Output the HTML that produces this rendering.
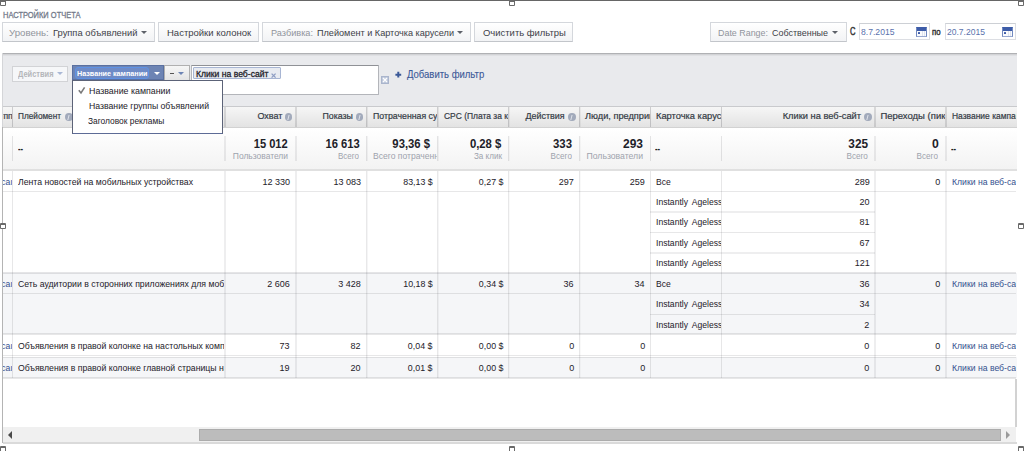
<!DOCTYPE html>
<html><head><meta charset="utf-8"><style>
html,body{margin:0;padding:0;width:1024px;height:451px;overflow:hidden;background:#fff;position:relative}
body div{position:absolute;box-sizing:border-box}
.t{position:absolute;white-space:pre;font-family:"Liberation Sans", sans-serif;-webkit-text-stroke:0px currentColor}
</style></head><body>
<div style='left:0px;top:0px;width:1024px;height:1px;background:#666666'></div>
<span class='t' style='top:10.80px;font-size:8.5px;line-height:8.5px;color:#737a8a;font-weight:normal;transform:scaleX(0.8805);left:2.50px;transform-origin:0 0;-webkit-text-stroke:0.3px #737a8a'>НАСТРОЙКИ ОТЧЕТА</span>
<div style='left:2px;top:22px;width:153px;height:20px;border:1px solid #d4d7dc;border-bottom-color:#c2c5ca;background:linear-gradient(#ffffff,#f2f3f5);'></div>
<span class='t' style='top:27.96px;font-size:9.5px;line-height:9.5px;color:#90949c;font-weight:normal;transform:scaleX(1.0144);left:9.40px;transform-origin:0 0;'>Уровень:</span>
<span class='t' style='top:27.96px;font-size:9.5px;line-height:9.5px;color:#3d4148;font-weight:normal;transform:scaleX(0.9841);left:52.80px;transform-origin:0 0;'>Группа объявлений</span>
<div style='left:141.4px;top:30.5px;width:0;height:0;border-left:3.0px solid transparent;border-right:3.0px solid transparent;border-top:3.5px solid #5d6169'></div>
<div style='left:158px;top:22px;width:101px;height:20px;border:1px solid #d4d7dc;border-bottom-color:#c2c5ca;background:linear-gradient(#ffffff,#f2f3f5);'></div>
<span class='t' style='top:27.96px;font-size:9.5px;line-height:9.5px;color:#3d4148;font-weight:normal;transform:scaleX(1.0001);left:166.60px;transform-origin:0 0;'>Настройки колонок</span>
<div style='left:262px;top:22px;width:209px;height:20px;border:1px solid #d4d7dc;border-bottom-color:#c2c5ca;background:linear-gradient(#ffffff,#f2f3f5);'></div>
<span class='t' style='top:27.96px;font-size:9.5px;line-height:9.5px;color:#90949c;font-weight:normal;transform:scaleX(0.9648);left:271.00px;transform-origin:0 0;'>Разбивка:</span>
<span class='t' style='top:27.96px;font-size:9.5px;line-height:9.5px;color:#3d4148;font-weight:normal;transform:scaleX(0.9598);left:316.70px;transform-origin:0 0;'>Плейомент и Карточка карусели</span>
<div style='left:457px;top:30.5px;width:0;height:0;border-left:3.0px solid transparent;border-right:3.0px solid transparent;border-top:3.5px solid #5d6169'></div>
<div style='left:474px;top:22px;width:99px;height:20px;border:1px solid #d4d7dc;border-bottom-color:#c2c5ca;background:linear-gradient(#ffffff,#f2f3f5);'></div>
<span class='t' style='top:27.96px;font-size:9.5px;line-height:9.5px;color:#3d4148;font-weight:normal;transform:scaleX(0.9947);left:482.60px;transform-origin:0 0;'>Очистить фильтры</span>
<div style='left:710px;top:22px;width:137px;height:20px;border:1px solid #d4d7dc;border-bottom-color:#c2c5ca;background:linear-gradient(#ffffff,#f2f3f5);'></div>
<span class='t' style='top:27.96px;font-size:9.5px;line-height:9.5px;color:#90949c;font-weight:normal;transform:scaleX(0.9373);left:718.00px;transform-origin:0 0;'>Date Range:</span>
<span class='t' style='top:27.96px;font-size:9.5px;line-height:9.5px;color:#3d4148;font-weight:normal;transform:scaleX(0.9424);left:772.00px;transform-origin:0 0;'>Собственные</span>
<div style='left:832px;top:30.5px;width:0;height:0;border-left:3.0px solid transparent;border-right:3.0px solid transparent;border-top:3.5px solid #5d6169'></div>
<span class='t' style='top:26.74px;font-size:10px;line-height:10px;color:#333;font-weight:normal;transform:scaleX(0.7603);left:850.00px;transform-origin:0 0;-webkit-text-stroke:0.45px #333'>С</span>
<div style='left:859px;top:23px;width:71px;height:17px;border:1px solid #dcdee3;border-top-color:#cdd0d5;background:#fff;'></div>
<span class='t' style='top:26.96px;font-size:9.5px;line-height:9.5px;color:#5a72ad;font-weight:normal;transform:scaleX(0.9058);left:861.00px;transform-origin:0 0;'>8.7.2015</span>
<span class='t' style='top:27.16px;font-size:9.5px;line-height:9.5px;color:#333;font-weight:normal;transform:scaleX(0.8240);left:932.40px;transform-origin:0 0;-webkit-text-stroke:0.45px #333'>по</span>
<div style='left:945px;top:23px;width:71px;height:17px;border:1px solid #dcdee3;border-top-color:#cdd0d5;background:#fff;'></div>
<span class='t' style='top:26.96px;font-size:9.5px;line-height:9.5px;color:#5a72ad;font-weight:normal;transform:scaleX(0.8991);left:947.00px;transform-origin:0 0;'>20.7.2015</span>
<div style='left:916px;top:27px;width:10.5px;height:9.5px;border:1px solid #7189c0;border-top-color:#3d5ca8;border-bottom-color:#98a8d0;background:#fafbfd'><div style='left:0;top:0;width:8.5px;height:2.5px;background:#3d5ca8'></div><div style='left:1px;top:3.6px;width:2.2px;height:2.2px;background:#3a58a6;border-radius:0.5px'></div><div style='left:5px;top:2.5px;width:1px;height:5px;background:#dfe4ef'></div><div style='left:7px;top:2.5px;width:1px;height:5px;background:#dfe4ef'></div></div>
<div style='left:1002px;top:27px;width:10.5px;height:9.5px;border:1px solid #7189c0;border-top-color:#3d5ca8;border-bottom-color:#98a8d0;background:#fafbfd'><div style='left:0;top:0;width:8.5px;height:2.5px;background:#3d5ca8'></div><div style='left:1px;top:3.6px;width:2.2px;height:2.2px;background:#3a58a6;border-radius:0.5px'></div><div style='left:5px;top:2.5px;width:1px;height:5px;background:#dfe4ef'></div><div style='left:7px;top:2.5px;width:1px;height:5px;background:#dfe4ef'></div></div>
<div style='left:2px;top:53px;width:1015px;height:53px;background:#e9eaed;border-top:1px solid #b0b1b4'></div>
<div style='left:3px;top:54px;width:1014px;height:1px;background:#d2d3d6'></div>
<div style='left:3px;top:55px;width:1014px;height:1px;background:#dfe0e3'></div>
<div style='left:12px;top:66px;width:56px;height:16px;background:#f6f7f9;border:1px solid #d2d3d6'></div>
<span class='t' style='top:69.88px;font-size:9px;line-height:9px;color:#b4b6ba;font-weight:bold;-webkit-text-stroke:0;transform:scaleX(0.8295);left:18.00px;transform-origin:0 0;'>Действия</span>
<div style='left:57px;top:72.2px;width:0;height:0;border-left:3.0px solid transparent;border-right:3.0px solid transparent;border-top:3.5px solid #a9b8d6'></div>
<div style='left:72px;top:65px;width:92px;height:15px;background:#6d84b4;border:1px solid #5a70a0'></div>
<div style='left:75px;top:67px;width:74px;height:12px;background:#6f8bc6;border:1.5px solid #5f92e4;border-radius:3px'></div>
<span class='t' style='top:69.53px;font-size:8px;line-height:8px;color:#ffffff;font-weight:bold;-webkit-text-stroke:0;transform:scaleX(0.9002);left:77.00px;transform-origin:0 0;'>Название кампании</span>
<div style='left:154.4px;top:72px;width:0;height:0;border-left:3.25px solid transparent;border-right:3.25px solid transparent;border-top:3.8px solid #ffffff'></div>
<div style='left:164px;top:65px;width:26px;height:15.5px;background:linear-gradient(#f6f6f6,#e4e4e4);border:1px solid #b0b0b0;border-bottom-color:#8f8f8f'></div>
<div style='left:169.5px;top:73px;width:4.5px;height:1.2px;background:#555'></div>
<div style='left:178px;top:71.6px;width:0;height:0;border-left:3.5px solid transparent;border-right:3.5px solid transparent;border-top:3.9px solid #6d84b4'></div>
<div style='left:191px;top:65px;width:188px;height:30px;background:#fff;border:1px solid #b3b5ba;border-top-color:#8f9196;border-radius:1px'></div>
<div style='left:193px;top:67px;width:88px;height:12px;background:#e8ebf1;border:1px solid #a7b5d3;border-radius:1px'></div>
<span class='t' style='top:68.76px;font-size:9.5px;line-height:9.5px;color:#1d2129;font-weight:normal;transform:scaleX(0.9054);left:196.00px;transform-origin:0 0;-webkit-text-stroke:0.3px #1d2129'>Клики на веб-сайт</span>
<svg style='position:absolute;left:0;top:0' width='1024' height='451'><path d='M271.6 73.6L275.6 77.6M275.6 73.6L271.6 77.6' stroke='#8d9dc3' stroke-width='1.3' fill='none'/></svg>
<div style='left:381px;top:76px;width:8px;height:8px;background:#bcc6da;border:1px solid #aab5cc'></div>
<svg style='position:absolute;left:0;top:0' width='1024' height='451'><path d='M383 78L387 82M387 78L383 82' stroke='#fff' stroke-width='1.4' fill='none'/></svg>
<svg style='position:absolute;left:0;top:0' width='1024' height='451'><path d='M395.4 74.7H401.2M398.3 71.8V77.6' stroke='#3b5998' stroke-width='2' fill='none'/></svg>
<span class='t' style='top:69.53px;font-size:10px;line-height:10px;color:#3b5998;font-weight:normal;transform:scaleX(0.9507);left:406.50px;transform-origin:0 0;-webkit-text-stroke:0.1px #3b5998'>Добавить фильтр</span>
<div style='left:2px;top:106px;width:1015px;height:22px;background:linear-gradient(#f6f6f6,#e3e3e3);border-top:1px solid #c9cacd;border-bottom:1px solid #d2d2d2'></div>
<div style='left:12px;top:107px;width:1px;height:20px;background:rgba(30,30,40,0.190)'></div>
<div style='left:224px;top:107px;width:1px;height:20px;background:rgba(30,30,40,0.133)'></div>
<div style='left:225px;top:107px;width:1px;height:20px;background:rgba(30,30,40,0.133)'></div>
<div style='left:295px;top:107px;width:1px;height:20px;background:rgba(30,30,40,0.133)'></div>
<div style='left:296px;top:107px;width:1px;height:20px;background:rgba(30,30,40,0.133)'></div>
<div style='left:366px;top:107px;width:1px;height:20px;background:rgba(30,30,40,0.186)'></div>
<div style='left:367px;top:107px;width:1px;height:20px;background:rgba(30,30,40,0.080)'></div>
<div style='left:437px;top:107px;width:1px;height:20px;background:rgba(30,30,40,0.186)'></div>
<div style='left:438px;top:107px;width:1px;height:20px;background:rgba(30,30,40,0.080)'></div>
<div style='left:508px;top:107px;width:1px;height:20px;background:rgba(30,30,40,0.190)'></div>
<div style='left:509px;top:107px;width:1px;height:20px;background:rgba(30,30,40,0.053)'></div>
<div style='left:579px;top:107px;width:1px;height:20px;background:rgba(30,30,40,0.190)'></div>
<div style='left:580px;top:107px;width:1px;height:20px;background:rgba(30,30,40,0.053)'></div>
<div style='left:650px;top:107px;width:1px;height:20px;background:rgba(30,30,40,0.190)'></div>
<div style='left:721px;top:107px;width:1px;height:20px;background:rgba(30,30,40,0.190)'></div>
<div style='left:874px;top:107px;width:1px;height:20px;background:rgba(30,30,40,0.133)'></div>
<div style='left:875px;top:107px;width:1px;height:20px;background:rgba(30,30,40,0.133)'></div>
<div style='left:945px;top:107px;width:1px;height:20px;background:rgba(30,30,40,0.133)'></div>
<div style='left:946px;top:107px;width:1px;height:20px;background:rgba(30,30,40,0.133)'></div>
<div style='left:3px;top:0;width:9px;height:451px;overflow:hidden'><span class='t' style='top:111.36px;font-size:9.5px;line-height:9.5px;color:#333a44;font-weight:normal;transform:scaleX(0.9000);left:-5.14px;transform-origin:100% 0;-webkit-text-stroke:0.2px #333a44'>тпп</span></div>
<span class='t' style='top:111.36px;font-size:9.5px;line-height:9.5px;color:#333a44;font-weight:normal;transform:scaleX(0.8657);left:18.00px;transform-origin:0 0;-webkit-text-stroke:0.2px #333a44'>Плейомент</span>
<div style='left:65px;top:113px;width:7.5px;height:8px;border-radius:50%;background:#a2aabb'><div style='left:3.3px;top:1.8px;width:1.1px;height:4.6px;background:#dfe3ea;transform:skewX(-14deg)'></div></div>
<span class='t' style='top:111.36px;font-size:9.5px;line-height:9.5px;color:#333a44;font-weight:normal;transform:scaleX(0.9467);left:255.59px;transform-origin:100% 0;-webkit-text-stroke:0.2px #333a44'>Охват</span>
<div style='left:284.5px;top:113px;width:7.5px;height:8px;border-radius:50%;background:#a2aabb'><div style='left:3.3px;top:1.8px;width:1.1px;height:4.6px;background:#dfe3ea;transform:skewX(-14deg)'></div></div>
<span class='t' style='top:111.36px;font-size:9.5px;line-height:9.5px;color:#333a44;font-weight:normal;transform:scaleX(0.9256);left:319.56px;transform-origin:100% 0;-webkit-text-stroke:0.2px #333a44'>Показы</span>
<div style='left:355.5px;top:113px;width:7.5px;height:8px;border-radius:50%;background:#a2aabb'><div style='left:3.3px;top:1.8px;width:1.1px;height:4.6px;background:#dfe3ea;transform:skewX(-14deg)'></div></div>
<div style='left:368px;top:0;width:69px;height:451px;overflow:hidden'><span class='t' style='top:111.36px;font-size:9.5px;line-height:9.5px;color:#333a44;font-weight:normal;transform:scaleX(0.9200);left:4.70px;transform-origin:0 0;-webkit-text-stroke:0.2px #333a44'>Потраченная сумма</span></div>
<div style='left:439px;top:0;width:69px;height:451px;overflow:hidden'><span class='t' style='top:111.36px;font-size:9.5px;line-height:9.5px;color:#333a44;font-weight:normal;transform:scaleX(0.8900);left:4.90px;transform-origin:0 0;-webkit-text-stroke:0.2px #333a44'>CPC (Плата за клик)</span></div>
<span class='t' style='top:111.36px;font-size:9.5px;line-height:9.5px;color:#333a44;font-weight:normal;transform:scaleX(0.9417);left:523.38px;transform-origin:100% 0;-webkit-text-stroke:0.2px #333a44'>Действия</span>
<div style='left:568px;top:113px;width:7.5px;height:8px;border-radius:50%;background:#a2aabb'><div style='left:3.3px;top:1.8px;width:1.1px;height:4.6px;background:#dfe3ea;transform:skewX(-14deg)'></div></div>
<div style='left:581px;top:0;width:69px;height:451px;overflow:hidden'><span class='t' style='top:111.36px;font-size:9.5px;line-height:9.5px;color:#333a44;font-weight:normal;transform:scaleX(0.9700);left:4.00px;transform-origin:0 0;-webkit-text-stroke:0.2px #333a44'>Люди, предприняли</span></div>
<div style='left:652px;top:0;width:69px;height:451px;overflow:hidden'><span class='t' style='top:111.36px;font-size:9.5px;line-height:9.5px;color:#333a44;font-weight:normal;transform:scaleX(0.9800);left:3.70px;transform-origin:0 0;-webkit-text-stroke:0.2px #333a44'>Карточка карусели</span></div>
<span class='t' style='top:111.36px;font-size:9.5px;line-height:9.5px;color:#333a44;font-weight:normal;transform:scaleX(0.9790);left:781.22px;transform-origin:100% 0;-webkit-text-stroke:0.2px #333a44'>Клики на веб-сайт</span>
<div style='left:864px;top:113px;width:7.5px;height:8px;border-radius:50%;background:#a2aabb'><div style='left:3.3px;top:1.8px;width:1.1px;height:4.6px;background:#dfe3ea;transform:skewX(-14deg)'></div></div>
<div style='left:876px;top:0;width:69px;height:451px;overflow:hidden'><span class='t' style='top:111.36px;font-size:9.5px;line-height:9.5px;color:#333a44;font-weight:normal;left:4.40px;transform-origin:0 0;-webkit-text-stroke:0.2px #333a44'>Переходы (пиксель)</span></div>
<div style='left:947px;top:0;width:69px;height:451px;overflow:hidden'><span class='t' style='top:111.36px;font-size:9.5px;line-height:9.5px;color:#333a44;font-weight:normal;transform:scaleX(0.8900);left:4.90px;transform-origin:0 0;-webkit-text-stroke:0.2px #333a44'>Название кампании</span></div>
<div style='left:2px;top:128px;width:1015px;height:43px;background:linear-gradient(#ffffff,#f3f3f3);border-bottom:2px solid #e0e0e0'></div>
<div style='left:12px;top:136px;width:1px;height:25px;background:rgba(30,30,40,0.110)'></div>
<div style='left:224px;top:136px;width:1px;height:25px;background:rgba(30,30,40,0.077)'></div>
<div style='left:225px;top:136px;width:1px;height:25px;background:rgba(30,30,40,0.077)'></div>
<div style='left:295px;top:136px;width:1px;height:25px;background:rgba(30,30,40,0.077)'></div>
<div style='left:296px;top:136px;width:1px;height:25px;background:rgba(30,30,40,0.077)'></div>
<div style='left:366px;top:136px;width:1px;height:25px;background:rgba(30,30,40,0.108)'></div>
<div style='left:367px;top:136px;width:1px;height:25px;background:rgba(30,30,40,0.046)'></div>
<div style='left:437px;top:136px;width:1px;height:25px;background:rgba(30,30,40,0.108)'></div>
<div style='left:438px;top:136px;width:1px;height:25px;background:rgba(30,30,40,0.046)'></div>
<div style='left:508px;top:136px;width:1px;height:25px;background:rgba(30,30,40,0.110)'></div>
<div style='left:509px;top:136px;width:1px;height:25px;background:rgba(30,30,40,0.031)'></div>
<div style='left:579px;top:136px;width:1px;height:25px;background:rgba(30,30,40,0.110)'></div>
<div style='left:580px;top:136px;width:1px;height:25px;background:rgba(30,30,40,0.031)'></div>
<div style='left:650px;top:136px;width:1px;height:25px;background:rgba(30,30,40,0.110)'></div>
<div style='left:721px;top:136px;width:1px;height:25px;background:rgba(30,30,40,0.110)'></div>
<div style='left:874px;top:136px;width:1px;height:25px;background:rgba(30,30,40,0.077)'></div>
<div style='left:875px;top:136px;width:1px;height:25px;background:rgba(30,30,40,0.077)'></div>
<div style='left:945px;top:136px;width:1px;height:25px;background:rgba(30,30,40,0.077)'></div>
<div style='left:946px;top:136px;width:1px;height:25px;background:rgba(30,30,40,0.077)'></div>
<span class='t' style='top:143.53px;font-size:10px;line-height:10px;color:#222;font-weight:bold;-webkit-text-stroke:0;transform:scaleX(0.7494);left:18.00px;transform-origin:0 0;'>--</span>
<span class='t' style='top:137.84px;font-size:12px;line-height:12px;color:#1d2129;font-weight:bold;-webkit-text-stroke:0;transform:scaleX(0.9264);left:251.30px;transform-origin:100% 0;'>15 012</span>
<span class='t' style='top:151.46px;font-size:9.5px;line-height:9.5px;color:#9ea3ad;font-weight:normal;transform:scaleX(0.8901);left:225.98px;transform-origin:100% 0;'>Пользователи</span>
<span class='t' style='top:137.84px;font-size:12px;line-height:12px;color:#1d2129;font-weight:bold;-webkit-text-stroke:0;transform:scaleX(0.9345);left:322.60px;transform-origin:100% 0;'>16 613</span>
<span class='t' style='top:151.46px;font-size:9.5px;line-height:9.5px;color:#9ea3ad;font-weight:normal;transform:scaleX(0.8426);left:334.38px;transform-origin:100% 0;'>Всего</span>
<span class='t' style='top:137.84px;font-size:12px;line-height:12px;color:#1d2129;font-weight:bold;-webkit-text-stroke:0;transform:scaleX(0.9414);left:389.95px;transform-origin:100% 0;'>93,36 $</span>
<div style='left:368px;top:0;width:69px;height:451px;overflow:hidden'><span class='t' style='top:151.46px;font-size:9.5px;line-height:9.5px;color:#9ea3ad;font-weight:normal;transform:scaleX(0.9000);left:4.70px;transform-origin:0 0;'>Всего потраченная</span></div>
<span class='t' style='top:137.84px;font-size:12px;line-height:12px;color:#1d2129;font-weight:bold;-webkit-text-stroke:0;transform:scaleX(0.9438);left:468.12px;transform-origin:100% 0;'>0,28 $</span>
<span class='t' style='top:151.46px;font-size:9.5px;line-height:9.5px;color:#9ea3ad;font-weight:normal;transform:scaleX(0.8501);left:468.56px;transform-origin:100% 0;'>За клик</span>
<span class='t' style='top:137.84px;font-size:12px;line-height:12px;color:#1d2129;font-weight:bold;-webkit-text-stroke:0;transform:scaleX(0.9485);left:551.97px;transform-origin:100% 0;'>333</span>
<span class='t' style='top:151.46px;font-size:9.5px;line-height:9.5px;color:#9ea3ad;font-weight:normal;transform:scaleX(0.8547);left:547.08px;transform-origin:100% 0;'>Всего</span>
<span class='t' style='top:137.84px;font-size:12px;line-height:12px;color:#1d2129;font-weight:bold;-webkit-text-stroke:0;transform:scaleX(0.9984);left:623.27px;transform-origin:100% 0;'>293</span>
<span class='t' style='top:151.46px;font-size:9.5px;line-height:9.5px;color:#9ea3ad;font-weight:normal;transform:scaleX(0.9111);left:581.28px;transform-origin:100% 0;'>Пользователи</span>
<span class='t' style='top:143.53px;font-size:10px;line-height:10px;color:#222;font-weight:bold;-webkit-text-stroke:0;transform:scaleX(0.7494);left:655.00px;transform-origin:0 0;'>--</span>
<span class='t' style='top:137.84px;font-size:12px;line-height:12px;color:#1d2129;font-weight:bold;-webkit-text-stroke:0;transform:scaleX(0.9835);left:847.97px;transform-origin:100% 0;'>325</span>
<span class='t' style='top:151.46px;font-size:9.5px;line-height:9.5px;color:#9ea3ad;font-weight:normal;transform:scaleX(0.8587);left:843.08px;transform-origin:100% 0;'>Всего</span>
<span class='t' style='top:137.84px;font-size:12px;line-height:12px;color:#1d2129;font-weight:bold;-webkit-text-stroke:0;transform:scaleX(1.0168);left:931.61px;transform-origin:100% 0;'>0</span>
<span class='t' style='top:151.46px;font-size:9.5px;line-height:9.5px;color:#9ea3ad;font-weight:normal;transform:scaleX(0.8547);left:913.38px;transform-origin:100% 0;'>Всего</span>
<span class='t' style='top:143.53px;font-size:10px;line-height:10px;color:#222;font-weight:bold;-webkit-text-stroke:0;transform:scaleX(0.7494);left:951.00px;transform-origin:0 0;'>--</span>
<div style='left:2px;top:171px;width:1015px;height:102px;background:#fff'></div>
<div style='left:2px;top:273px;width:1015px;height:61px;background:#f5f6f8'></div>
<div style='left:2px;top:334px;width:1015px;height:22px;background:#fff'></div>
<div style='left:2px;top:357px;width:1015px;height:21px;background:#f5f6f8'></div>
<div style='left:3px;top:191px;width:1013px;height:1px;background:rgba(30,30,40,0.105)'></div>
<div style='left:3px;top:293px;width:1013px;height:1px;background:rgba(30,30,40,0.105)'></div>
<div style='left:3px;top:355px;width:1013px;height:1px;background:rgba(30,30,40,0.105)'></div>
<div style='left:3px;top:357px;width:1013px;height:1px;background:rgba(30,30,40,0.105)'></div>
<div style='left:3px;top:272px;width:1013px;height:1px;background:rgba(30,30,40,0.112)'></div>
<div style='left:3px;top:273px;width:1013px;height:1px;background:rgba(30,30,40,0.112)'></div>
<div style='left:3px;top:333px;width:1013px;height:1px;background:rgba(30,30,40,0.105)'></div>
<div style='left:3px;top:334px;width:1013px;height:1px;background:rgba(30,30,40,0.105)'></div>
<div style='left:3px;top:377px;width:1013px;height:1px;background:rgba(30,30,40,0.105)'></div>
<div style='left:3px;top:378px;width:1013px;height:1px;background:rgba(30,30,40,0.105)'></div>
<div style='left:650px;top:211px;width:225px;height:1px;background:rgba(30,30,40,0.073)'></div>
<div style='left:650px;top:212px;width:225px;height:1px;background:rgba(30,30,40,0.073)'></div>
<div style='left:650px;top:232px;width:225px;height:1px;background:rgba(30,30,40,0.105)'></div>
<div style='left:650px;top:252px;width:225px;height:1px;background:rgba(30,30,40,0.073)'></div>
<div style='left:650px;top:253px;width:225px;height:1px;background:rgba(30,30,40,0.073)'></div>
<div style='left:650px;top:314px;width:225px;height:1px;background:rgba(30,30,40,0.105)'></div>
<div style='left:12px;top:171px;width:1px;height:207px;background:rgba(30,30,40,0.105)'></div>
<div style='left:224px;top:171px;width:1px;height:207px;background:rgba(30,30,40,0.073)'></div>
<div style='left:225px;top:171px;width:1px;height:207px;background:rgba(30,30,40,0.073)'></div>
<div style='left:295px;top:171px;width:1px;height:207px;background:rgba(30,30,40,0.073)'></div>
<div style='left:296px;top:171px;width:1px;height:207px;background:rgba(30,30,40,0.073)'></div>
<div style='left:366px;top:171px;width:1px;height:207px;background:rgba(30,30,40,0.103)'></div>
<div style='left:367px;top:171px;width:1px;height:207px;background:rgba(30,30,40,0.044)'></div>
<div style='left:437px;top:171px;width:1px;height:207px;background:rgba(30,30,40,0.103)'></div>
<div style='left:438px;top:171px;width:1px;height:207px;background:rgba(30,30,40,0.044)'></div>
<div style='left:508px;top:171px;width:1px;height:207px;background:rgba(30,30,40,0.105)'></div>
<div style='left:509px;top:171px;width:1px;height:207px;background:rgba(30,30,40,0.029)'></div>
<div style='left:579px;top:171px;width:1px;height:207px;background:rgba(30,30,40,0.105)'></div>
<div style='left:580px;top:171px;width:1px;height:207px;background:rgba(30,30,40,0.029)'></div>
<div style='left:650px;top:171px;width:1px;height:207px;background:rgba(30,30,40,0.105)'></div>
<div style='left:721px;top:171px;width:1px;height:207px;background:rgba(30,30,40,0.105)'></div>
<div style='left:874px;top:171px;width:1px;height:207px;background:rgba(30,30,40,0.073)'></div>
<div style='left:875px;top:171px;width:1px;height:207px;background:rgba(30,30,40,0.073)'></div>
<div style='left:945px;top:171px;width:1px;height:207px;background:rgba(30,30,40,0.073)'></div>
<div style='left:946px;top:171px;width:1px;height:207px;background:rgba(30,30,40,0.073)'></div>
<div style='left:3px;top:0;width:9px;height:451px;overflow:hidden'><span class='t' style='top:176.96px;font-size:9.5px;line-height:9.5px;color:#34508e;font-weight:normal;transform:scaleX(0.9000);left:-3.19px;transform-origin:100% 0;'>саı</span></div>
<div style='left:13px;top:0;width:211px;height:451px;overflow:hidden'><span class='t' style='top:176.96px;font-size:9.5px;line-height:9.5px;color:#1d2129;font-weight:normal;transform:scaleX(0.9150);left:5.00px;transform-origin:0 0;'>Лента новостей на мобильных устройствах</span></div>
<span class='t' style='top:176.96px;font-size:9.5px;line-height:9.5px;color:#1d2129;font-weight:normal;transform:scaleX(0.9500);left:260.94px;transform-origin:100% 0;'>12 330</span>
<span class='t' style='top:176.96px;font-size:9.5px;line-height:9.5px;color:#1d2129;font-weight:normal;transform:scaleX(0.9500);left:331.94px;transform-origin:100% 0;'>13 083</span>
<span class='t' style='top:176.96px;font-size:9.5px;line-height:9.5px;color:#1d2129;font-weight:normal;transform:scaleX(0.9300);left:400.80px;transform-origin:100% 0;'>83,13 $</span>
<span class='t' style='top:176.96px;font-size:9.5px;line-height:9.5px;color:#1d2129;font-weight:normal;transform:scaleX(0.9300);left:477.08px;transform-origin:100% 0;'>0,27 $</span>
<span class='t' style='top:176.96px;font-size:9.5px;line-height:9.5px;color:#1d2129;font-weight:normal;transform:scaleX(0.9500);left:558.14px;transform-origin:100% 0;'>297</span>
<span class='t' style='top:176.96px;font-size:9.5px;line-height:9.5px;color:#1d2129;font-weight:normal;transform:scaleX(0.9500);left:629.14px;transform-origin:100% 0;'>259</span>
<span class='t' style='top:176.96px;font-size:9.5px;line-height:9.5px;color:#1d2129;font-weight:normal;transform:scaleX(0.9000);left:656.00px;transform-origin:0 0;'>Все</span>
<span class='t' style='top:176.96px;font-size:9.5px;line-height:9.5px;color:#1d2129;font-weight:normal;transform:scaleX(0.9500);left:853.64px;transform-origin:100% 0;'>289</span>
<span class='t' style='top:176.96px;font-size:9.5px;line-height:9.5px;color:#1d2129;font-weight:normal;transform:scaleX(0.9500);left:934.70px;transform-origin:100% 0;'>0</span>
<div style='left:946px;top:0;width:70px;height:451px;overflow:hidden'><span class='t' style='top:176.96px;font-size:9.5px;line-height:9.5px;color:#34508e;font-weight:normal;transform:scaleX(0.9100);left:5.50px;transform-origin:0 0;'>Клики на веб-сайт</span></div>
<div style='left:651px;top:0;width:70px;height:451px;overflow:hidden'><span class='t' style='top:196.96px;font-size:9.5px;line-height:9.5px;color:#1d2129;font-weight:normal;transform:scaleX(0.9050);left:5.00px;transform-origin:0 0;word-spacing:2px'>Instantly Ageless</span></div>
<span class='t' style='top:196.96px;font-size:9.5px;line-height:9.5px;color:#1d2129;font-weight:normal;transform:scaleX(0.9500);left:858.92px;transform-origin:100% 0;'>20</span>
<div style='left:651px;top:0;width:70px;height:451px;overflow:hidden'><span class='t' style='top:217.46px;font-size:9.5px;line-height:9.5px;color:#1d2129;font-weight:normal;transform:scaleX(0.9050);left:5.00px;transform-origin:0 0;word-spacing:2px'>Instantly Ageless</span></div>
<span class='t' style='top:217.46px;font-size:9.5px;line-height:9.5px;color:#1d2129;font-weight:normal;transform:scaleX(0.9500);left:858.92px;transform-origin:100% 0;'>81</span>
<div style='left:651px;top:0;width:70px;height:451px;overflow:hidden'><span class='t' style='top:237.96px;font-size:9.5px;line-height:9.5px;color:#1d2129;font-weight:normal;transform:scaleX(0.9050);left:5.00px;transform-origin:0 0;word-spacing:2px'>Instantly Ageless</span></div>
<span class='t' style='top:237.96px;font-size:9.5px;line-height:9.5px;color:#1d2129;font-weight:normal;transform:scaleX(0.9500);left:858.92px;transform-origin:100% 0;'>67</span>
<div style='left:651px;top:0;width:70px;height:451px;overflow:hidden'><span class='t' style='top:258.46px;font-size:9.5px;line-height:9.5px;color:#1d2129;font-weight:normal;transform:scaleX(0.9050);left:5.00px;transform-origin:0 0;word-spacing:2px'>Instantly Ageless</span></div>
<span class='t' style='top:258.46px;font-size:9.5px;line-height:9.5px;color:#1d2129;font-weight:normal;transform:scaleX(0.9500);left:853.64px;transform-origin:100% 0;'>121</span>
<div style='left:3px;top:0;width:9px;height:451px;overflow:hidden'><span class='t' style='top:278.96px;font-size:9.5px;line-height:9.5px;color:#34508e;font-weight:normal;transform:scaleX(0.9000);left:-3.19px;transform-origin:100% 0;'>саı</span></div>
<div style='left:13px;top:0;width:211px;height:451px;overflow:hidden'><span class='t' style='top:278.96px;font-size:9.5px;line-height:9.5px;color:#1d2129;font-weight:normal;transform:scaleX(0.9150);left:5.00px;transform-origin:0 0;'>Сеть аудитории в сторонних приложениях для мобильных</span></div>
<span class='t' style='top:278.96px;font-size:9.5px;line-height:9.5px;color:#1d2129;font-weight:normal;transform:scaleX(0.9500);left:266.22px;transform-origin:100% 0;'>2 606</span>
<span class='t' style='top:278.96px;font-size:9.5px;line-height:9.5px;color:#1d2129;font-weight:normal;transform:scaleX(0.9500);left:337.22px;transform-origin:100% 0;'>3 428</span>
<span class='t' style='top:278.96px;font-size:9.5px;line-height:9.5px;color:#1d2129;font-weight:normal;transform:scaleX(0.9300);left:400.80px;transform-origin:100% 0;'>10,18 $</span>
<span class='t' style='top:278.96px;font-size:9.5px;line-height:9.5px;color:#1d2129;font-weight:normal;transform:scaleX(0.9300);left:477.08px;transform-origin:100% 0;'>0,34 $</span>
<span class='t' style='top:278.96px;font-size:9.5px;line-height:9.5px;color:#1d2129;font-weight:normal;transform:scaleX(0.9500);left:563.42px;transform-origin:100% 0;'>36</span>
<span class='t' style='top:278.96px;font-size:9.5px;line-height:9.5px;color:#1d2129;font-weight:normal;transform:scaleX(0.9500);left:634.42px;transform-origin:100% 0;'>34</span>
<span class='t' style='top:278.96px;font-size:9.5px;line-height:9.5px;color:#1d2129;font-weight:normal;transform:scaleX(0.9000);left:656.00px;transform-origin:0 0;'>Все</span>
<span class='t' style='top:278.96px;font-size:9.5px;line-height:9.5px;color:#1d2129;font-weight:normal;transform:scaleX(0.9500);left:858.92px;transform-origin:100% 0;'>36</span>
<span class='t' style='top:278.96px;font-size:9.5px;line-height:9.5px;color:#1d2129;font-weight:normal;transform:scaleX(0.9500);left:934.70px;transform-origin:100% 0;'>0</span>
<div style='left:946px;top:0;width:70px;height:451px;overflow:hidden'><span class='t' style='top:278.96px;font-size:9.5px;line-height:9.5px;color:#34508e;font-weight:normal;transform:scaleX(0.9100);left:5.50px;transform-origin:0 0;'>Клики на веб-сайт</span></div>
<div style='left:651px;top:0;width:70px;height:451px;overflow:hidden'><span class='t' style='top:299.46px;font-size:9.5px;line-height:9.5px;color:#1d2129;font-weight:normal;transform:scaleX(0.9050);left:5.00px;transform-origin:0 0;word-spacing:2px'>Instantly Ageless</span></div>
<span class='t' style='top:299.46px;font-size:9.5px;line-height:9.5px;color:#1d2129;font-weight:normal;transform:scaleX(0.9500);left:858.92px;transform-origin:100% 0;'>34</span>
<div style='left:651px;top:0;width:70px;height:451px;overflow:hidden'><span class='t' style='top:319.96px;font-size:9.5px;line-height:9.5px;color:#1d2129;font-weight:normal;transform:scaleX(0.9050);left:5.00px;transform-origin:0 0;word-spacing:2px'>Instantly Ageless</span></div>
<span class='t' style='top:319.96px;font-size:9.5px;line-height:9.5px;color:#1d2129;font-weight:normal;transform:scaleX(0.9500);left:864.20px;transform-origin:100% 0;'>2</span>
<div style='left:3px;top:0;width:9px;height:451px;overflow:hidden'><span class='t' style='top:340.96px;font-size:9.5px;line-height:9.5px;color:#34508e;font-weight:normal;transform:scaleX(0.9000);left:-3.19px;transform-origin:100% 0;'>саı</span></div>
<div style='left:13px;top:0;width:211px;height:451px;overflow:hidden'><span class='t' style='top:340.96px;font-size:9.5px;line-height:9.5px;color:#1d2129;font-weight:normal;transform:scaleX(0.9150);left:5.00px;transform-origin:0 0;'>Объявления в правой колонке на настольных компьютерах</span></div>
<span class='t' style='top:340.96px;font-size:9.5px;line-height:9.5px;color:#1d2129;font-weight:normal;transform:scaleX(0.9500);left:279.42px;transform-origin:100% 0;'>73</span>
<span class='t' style='top:340.96px;font-size:9.5px;line-height:9.5px;color:#1d2129;font-weight:normal;transform:scaleX(0.9500);left:350.42px;transform-origin:100% 0;'>82</span>
<span class='t' style='top:340.96px;font-size:9.5px;line-height:9.5px;color:#1d2129;font-weight:normal;transform:scaleX(0.9300);left:406.08px;transform-origin:100% 0;'>0,04 $</span>
<span class='t' style='top:340.96px;font-size:9.5px;line-height:9.5px;color:#1d2129;font-weight:normal;transform:scaleX(0.9300);left:477.08px;transform-origin:100% 0;'>0,00 $</span>
<span class='t' style='top:340.96px;font-size:9.5px;line-height:9.5px;color:#1d2129;font-weight:normal;transform:scaleX(0.9500);left:568.70px;transform-origin:100% 0;'>0</span>
<span class='t' style='top:340.96px;font-size:9.5px;line-height:9.5px;color:#1d2129;font-weight:normal;transform:scaleX(0.9500);left:639.70px;transform-origin:100% 0;'>0</span>
<span class='t' style='top:340.96px;font-size:9.5px;line-height:9.5px;color:#1d2129;font-weight:normal;transform:scaleX(0.9500);left:864.20px;transform-origin:100% 0;'>0</span>
<span class='t' style='top:340.96px;font-size:9.5px;line-height:9.5px;color:#1d2129;font-weight:normal;transform:scaleX(0.9500);left:934.70px;transform-origin:100% 0;'>0</span>
<div style='left:946px;top:0;width:70px;height:451px;overflow:hidden'><span class='t' style='top:340.96px;font-size:9.5px;line-height:9.5px;color:#34508e;font-weight:normal;transform:scaleX(0.9100);left:5.50px;transform-origin:0 0;'>Клики на веб-сайт</span></div>
<div style='left:3px;top:0;width:9px;height:451px;overflow:hidden'><span class='t' style='top:362.96px;font-size:9.5px;line-height:9.5px;color:#34508e;font-weight:normal;transform:scaleX(0.9000);left:-3.19px;transform-origin:100% 0;'>саı</span></div>
<div style='left:13px;top:0;width:211px;height:451px;overflow:hidden'><span class='t' style='top:362.96px;font-size:9.5px;line-height:9.5px;color:#1d2129;font-weight:normal;transform:scaleX(0.9150);left:5.00px;transform-origin:0 0;'>Объявления в правой колонке главной страницы на компьютерах</span></div>
<span class='t' style='top:362.96px;font-size:9.5px;line-height:9.5px;color:#1d2129;font-weight:normal;transform:scaleX(0.9500);left:279.42px;transform-origin:100% 0;'>19</span>
<span class='t' style='top:362.96px;font-size:9.5px;line-height:9.5px;color:#1d2129;font-weight:normal;transform:scaleX(0.9500);left:350.42px;transform-origin:100% 0;'>20</span>
<span class='t' style='top:362.96px;font-size:9.5px;line-height:9.5px;color:#1d2129;font-weight:normal;transform:scaleX(0.9300);left:406.08px;transform-origin:100% 0;'>0,01 $</span>
<span class='t' style='top:362.96px;font-size:9.5px;line-height:9.5px;color:#1d2129;font-weight:normal;transform:scaleX(0.9300);left:477.08px;transform-origin:100% 0;'>0,00 $</span>
<span class='t' style='top:362.96px;font-size:9.5px;line-height:9.5px;color:#1d2129;font-weight:normal;transform:scaleX(0.9500);left:568.70px;transform-origin:100% 0;'>0</span>
<span class='t' style='top:362.96px;font-size:9.5px;line-height:9.5px;color:#1d2129;font-weight:normal;transform:scaleX(0.9500);left:639.70px;transform-origin:100% 0;'>0</span>
<span class='t' style='top:362.96px;font-size:9.5px;line-height:9.5px;color:#1d2129;font-weight:normal;transform:scaleX(0.9500);left:864.20px;transform-origin:100% 0;'>0</span>
<span class='t' style='top:362.96px;font-size:9.5px;line-height:9.5px;color:#1d2129;font-weight:normal;transform:scaleX(0.9500);left:934.70px;transform-origin:100% 0;'>0</span>
<div style='left:946px;top:0;width:70px;height:451px;overflow:hidden'><span class='t' style='top:362.96px;font-size:9.5px;line-height:9.5px;color:#34508e;font-weight:normal;transform:scaleX(0.9100);left:5.50px;transform-origin:0 0;'>Клики на веб-сайт</span></div>
<div style='left:2px;top:53px;width:1px;height:74px;background:#d4d5d8'></div>
<div style='left:2px;top:127px;width:1px;height:316px;background:#b4b4b4'></div>
<div style='left:1015px;top:379px;width:2px;height:48px;background:#d2d2d2'></div>
<div style='left:3px;top:427px;width:1013px;height:15px;background:#f0f0f0'></div>
<div style='left:3px;top:442px;width:1014px;height:2px;background:#dadada'></div>
<div style='left:199px;top:429px;width:802px;height:12px;background:#bcbcbc;border:1px solid #acacac'></div>
<div style='left:8px;top:430.5px;width:0;height:0;border-top:4px solid transparent;border-bottom:4px solid transparent;border-right:4.5px solid #4a4a4a'></div>
<div style='left:1006px;top:430.5px;width:0;height:0;border-top:4px solid transparent;border-bottom:4px solid transparent;border-left:4.5px solid #9a9a9a'></div>
<div style='left:72px;top:80px;width:151px;height:54px;background:#fff;border:1px solid #5c6378;border-bottom-color:#5d6b96'></div>
<svg style='position:absolute;left:0;top:0' width='1024' height='451'><polyline points='78.8,90.3 81,93 84.6,87.4' fill='none' stroke='#7a7a7a' stroke-width='1.6'/></svg>
<span class='t' style='top:86.46px;font-size:9.5px;line-height:9.5px;color:#1d2129;font-weight:normal;transform:scaleX(0.9308);left:89.30px;transform-origin:0 0;'>Название кампании</span>
<span class='t' style='top:101.46px;font-size:9.5px;line-height:9.5px;color:#1d2129;font-weight:normal;transform:scaleX(0.9143);left:89.30px;transform-origin:0 0;'>Название группы объявлений</span>
<span class='t' style='top:116.46px;font-size:9.5px;line-height:9.5px;color:#1d2129;font-weight:normal;transform:scaleX(0.8827);left:88.40px;transform-origin:0 0;'>Заголовок рекламы</span>
<div style='left:0px;top:0px;width:6px;height:6px;background:#fff;border:1px solid #6a6a6a;border-top-width:2px;border-radius:1px'></div>
<div style='left:509px;top:0px;width:6px;height:6px;background:#fff;border:1px solid #6a6a6a;border-top-width:2px;border-radius:1px'></div>
<div style='left:1018px;top:0px;width:6px;height:6px;background:#fff;border:1px solid #6a6a6a;border-top-width:2px;border-radius:1px'></div>
<div style='left:0px;top:223px;width:6px;height:6px;background:#fff;border:1px solid #6a6a6a;border-top-width:2px;border-radius:1px'></div>
<div style='left:1018px;top:223px;width:6px;height:6px;background:#fff;border:1px solid #6a6a6a;border-top-width:2px;border-radius:1px'></div>
<div style='left:0px;top:446px;width:6px;height:6px;background:#fff;border:1px solid #6a6a6a;border-top-width:2px;border-radius:1px'></div>
<div style='left:509px;top:446px;width:6px;height:6px;background:#fff;border:1px solid #6a6a6a;border-top-width:2px;border-radius:1px'></div>
<div style='left:1018px;top:446px;width:6px;height:6px;background:#fff;border:1px solid #6a6a6a;border-top-width:2px;border-radius:1px'></div>
</body></html>
